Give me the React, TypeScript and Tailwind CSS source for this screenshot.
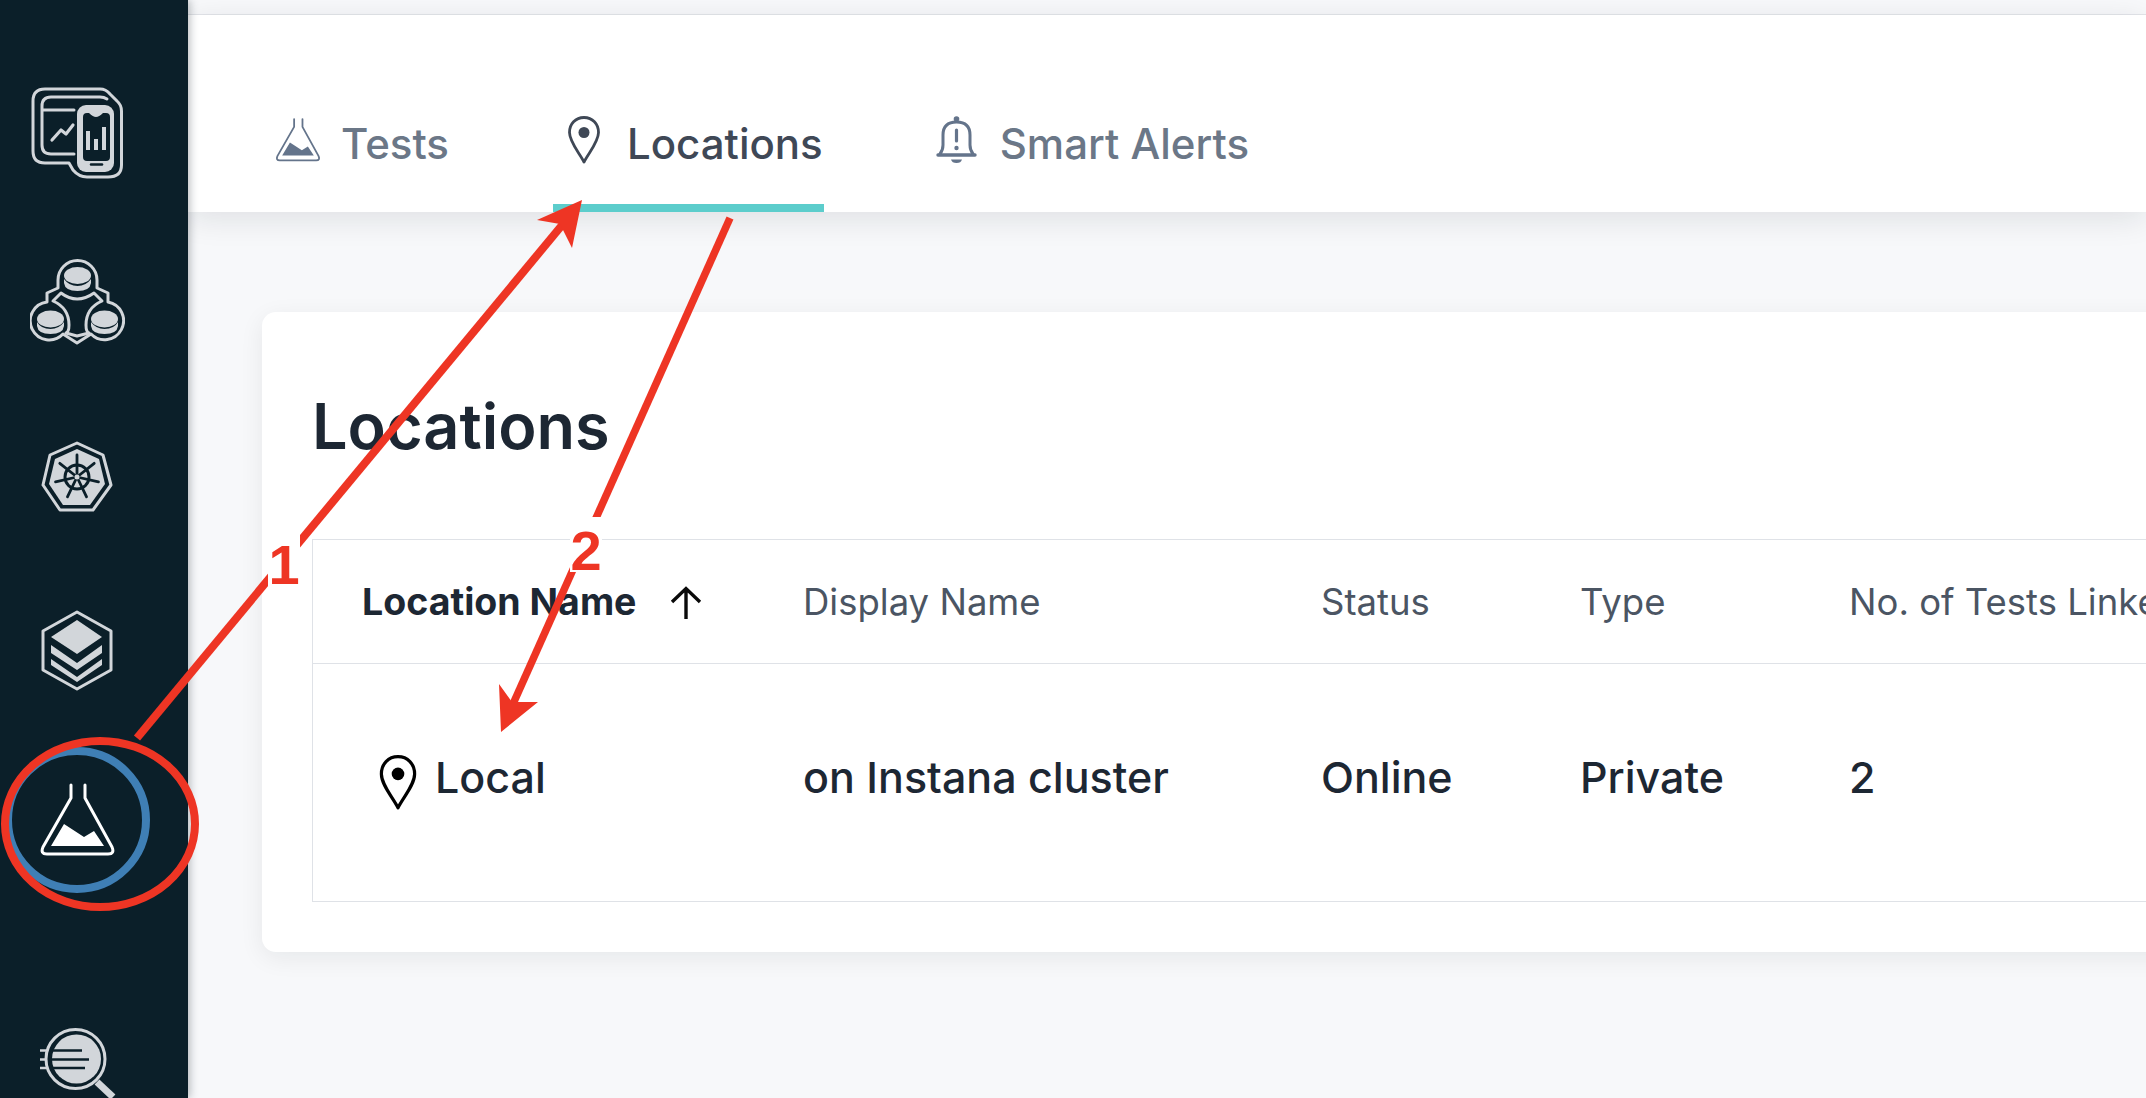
import * as React from "react"

const SIDE = "#d2d6da"
const DARK = "#0b1f29"
const RED = "#ee3524"

function MonitorIcon() {
  return (
    <svg width="95" height="94" viewBox="29 86 95 94" fill="none" stroke={SIDE} strokeWidth="3" strokeLinecap="round" strokeLinejoin="round">
      <path d="M44 89H99Q105 89 109 94L116 101Q120.500 105 120.500 111V165Q120.500 177 107 177H86Q78 177 72 170L68 163H44Q32 163 32 151V101Q32 89 44 89Z" />
      <path d="M106 99Q103 97 99 97H50Q41 97 41 106V145Q41 154 50 154H73" />
      <path d="M42 110H73" />
      <path d="M51 140L60 130L65 134L72 125" strokeWidth="3.200" />
      <rect x="76" y="105" width="37" height="67" rx="9" fill={SIDE} stroke="none" />
      <path d="M82 117Q82 113 86 113H88Q92 117 95 117Q98 117 102 113H105Q109 113 109 117V157Q109 161 105 161H86Q82 161 82 157Z" fill={DARK} stroke="none" />
      <path d="M87 131V150M95 139V150M103 127V150" strokeWidth="4" strokeLinecap="butt" />
      <path d="M90 164.500H101" stroke={DARK} strokeWidth="2.500" />
    </svg>
  )
}

function NodesIcon() {
  return (
    <svg width="95" height="86" viewBox="29 259 95 86" fill="none" stroke={SIDE} strokeWidth="3" strokeLinejoin="round">
      <path d="M57 288V280A19.500 19.500 0 0 1 96 280V288L107 293V302A19 19 0 1 1 90 334L76 343L62 334A19 19 0 1 1 46 302V293Z" />
      <path d="M60 293Q76 305 93 293L101 301Q85 308 85 325Q85 332 88 333L76 336L65 333Q68 332 68 325Q68 308 52 301Z" />
      <ellipse cx="76.500" cy="275.500" rx="13.500" ry="8.500" fill={SIDE} stroke="none" />
      <path d="M63 279V283Q64 291 76.500 291Q89 291 90 283V279Q85 286 76.500 286Q68 286 63 279Z" fill={SIDE} stroke="none" />
      <ellipse cx="49.500" cy="319" rx="13.500" ry="8.500" fill={SIDE} stroke="none" />
      <path d="M36 322V326Q37 334 49.500 334Q62 334 63 326V322Q58 329 49.500 329Q40 329 36 322Z" fill={SIDE} stroke="none" />
      <ellipse cx="103.500" cy="319" rx="13.500" ry="8.500" fill={SIDE} stroke="none" />
      <path d="M90 322V326Q91 334 103.500 334Q116 334 117 326V322Q113 329 103.500 329Q95 329 90 322Z" fill={SIDE} stroke="none" />
    </svg>
  )
}

function HelmIcon() {
  const spokes = [0, 1, 2, 3, 4, 5, 6].map((i) => {
    const a = (i * 2 * Math.PI) / 7 - Math.PI / 2
    return { x: 77 + Math.cos(a) * 22, y: 477 + Math.sin(a) * 22 }
  })
  return (
    <svg width="74" height="74" viewBox="40 440 74 74" fill="none">
      <path d="M77 443L103 455L111 485L93 510H60L43 485L50 455Z" stroke={SIDE} strokeWidth="3" strokeLinejoin="round" />
      <path d="M77 449L99 459L105 484L90 505H63L49 484L55 459Z" fill={SIDE} />
      <circle cx="77" cy="477" r="12" stroke={DARK} strokeWidth="3" />
      {spokes.map((s) => (
        <path key={s.x} d={`M77 477L${s.x} ${s.y}`} stroke={DARK} strokeWidth="2.800" strokeLinecap="round" />
      ))}
      <circle cx="77" cy="477" r="2.500" fill={SIDE} />
    </svg>
  )
}

function LayersIcon() {
  return (
    <svg width="74" height="84" viewBox="40 609 74 84" fill="none">
      <path d="M77 612L111 631V670L77 689L43 670V631Z" stroke={SIDE} strokeWidth="3" strokeLinejoin="round" />
      <path d="M77 620L102 637L77 654L51 637Z" fill={SIDE} />
      <path d="M51 645L77 663L102 645V653L77 670L51 653Z" fill={SIDE} />
      <path d="M51 659L77 677L102 659V665L77 682L51 665Z" fill={SIDE} />
    </svg>
  )
}

function FlaskIcon({ className, color }: { className: string; color: string }) {
  return (
    <svg className={className} viewBox="38 781 77 74" fill="none">
      <path d="M70 783V796L42 845Q39 852 46 852H107Q114 852 111 845L84 796V783" stroke={color} strokeWidth="3" strokeLinecap="round" strokeLinejoin="round" />
      <path d="M50 844L63 822L83 835L93 829L103 844Z" fill={color} />
    </svg>
  )
}

function SearchIcon() {
  return (
    <svg width="80" height="72" viewBox="36 1026 80 72" fill="none" stroke={SIDE}>
      <circle cx="74.500" cy="1059" r="29.500" strokeWidth="3" />
      <circle cx="75.500" cy="1059" r="24.500" fill={SIDE} stroke="none" />
      <path d="M51 1050.500H81M51 1059.500H88M51 1068H84" stroke={DARK} strokeWidth="2.500" />
      <path d="M39 1050.500H46M39 1059.500H46M39 1068H46" strokeWidth="2.500" />
      <path d="M96 1082L112 1097" strokeWidth="7" />
    </svg>
  )
}

function PinIcon({ className, color }: { className: string; color: string }) {
  return (
    <svg className={className} viewBox="0 0 32 48" fill="none">
      <path d="M16 1.500C7.500 1.500 1.500 8 1.500 16.500C1.500 26 11.500 37 16 46C20.500 37 30.500 26 30.500 16.500C30.500 8 24.500 1.500 16 1.500Z" stroke={color} strokeWidth="2.800" strokeLinejoin="round" />
      <circle cx="16" cy="16.500" r="5.500" fill={color} />
    </svg>
  )
}

function BellIcon() {
  return (
    <svg className="mb-[6px] h-[48px] w-[41px] shrink-0" viewBox="937 117 41 48" fill="none" stroke="#64748b" strokeWidth="3" strokeLinecap="round">
      <path d="M939 156H976" strokeWidth="3.400" />
      <path d="M941 155Q944 151 944 146V136Q944 123 957.500 123Q971 123 971 136V146Q971 151 974 155" />
      <circle cx="957.500" cy="120" r="2.800" fill="#64748b" stroke="none" />
      <path d="M952 160.500H963Q962 164 957.500 164Q953 164 952 160.500Z" fill="#64748b" stroke="none" />
      <path d="M957.500 131V142" strokeWidth="3.200" />
      <circle cx="957.500" cy="149" r="2.200" fill="#64748b" stroke="none" />
    </svg>
  )
}

function Annotations() {
  return (
    <>
      <svg className="absolute inset-0 z-20 h-[1098px] w-[2146px]" viewBox="0 0 2146 1098" fill="none">
        <ellipse cx="100" cy="824" rx="95" ry="83" stroke={RED} strokeWidth="8" />
        <path d="M137 738L563 224" stroke={RED} strokeWidth="8" />
        <path d="M582 200L537 220L560 224L572 248Z" fill={RED} />
        <path d="M730 218L513 704" stroke={RED} strokeWidth="7.500" />
        <path d="M501 732L499 684L512 702L538 702Z" fill={RED} />
      </svg>
      <span className="absolute left-[268px] top-[520px] z-30 flex h-[80px] w-[32px] items-center justify-center bg-white pt-[10px] font-['Liberation_Sans',sans-serif] text-[56px] leading-none font-bold text-[#ee3524]">
        1
      </span>
      <span className="absolute left-[570px] top-[517px] z-30 flex h-[55px] w-[32px] items-end justify-center bg-white font-['Liberation_Sans',sans-serif] text-[56px] leading-[42px] font-bold text-[#ee3524]">
        2
      </span>
    </>
  )
}

export default function App() {
  return (
    <div className="relative flex h-[1098px] w-[2146px] overflow-hidden bg-[#f7f8fa] font-['Inter',sans-serif]">
      {/* Sidebar */}
      <aside className="relative z-10 flex w-[188px] shrink-0 flex-col items-center bg-[#0b1f29] pr-[34px] shadow-[2px_0_8px_rgba(30,40,50,0.3)]">
        <div className="mt-[86px]">
          <MonitorIcon />
        </div>
        <div className="mt-[79px]">
          <NodesIcon />
        </div>
        <div className="mt-[95px]">
          <HelmIcon />
        </div>
        <div className="mt-[95px]">
          <LayersIcon />
        </div>
        <div className="mt-[54px] flex h-[146px] w-[146px] shrink-0 items-center justify-center rounded-full border-[8px] border-[#3f7fb5]">
          <FlaskIcon className="h-[74px] w-[77px]" color="#ffffff" />
        </div>
        <div className="mt-[133px]">
          <SearchIcon />
        </div>
      </aside>

      {/* Main */}
      <main className="flex min-w-0 flex-1 flex-col">
        <div className="h-[15px] shrink-0 border-b border-[#e4e6ea] bg-[#f8f9fb]" />

        <nav className="relative flex h-[197px] shrink-0 items-end bg-white pl-[87px] text-[42px] font-medium shadow-[0_6px_30px_rgba(20,25,35,0.11)]">
          <div className="flex h-[130px] items-center gap-[20px] border-b-[8px] border-transparent text-[#6b7787]">
            <FlaskIcon className="mb-[6px] h-[46px] w-[46px] shrink-0" color="#64748b" />
            <span>Tests</span>
          </div>
          <div className="ml-[104px] flex h-[130px] items-center gap-[27px] border-b-[8px] border-[#5ccdcc] pl-[15px] pr-[1px] text-[#3f4856]">
            <PinIcon className="mb-[6px] h-[48px] w-[32px] shrink-0" color="#3f4856" />
            <span>Locations</span>
          </div>
          <div className="ml-[112px] flex h-[130px] items-center gap-[23px] border-b-[8px] border-transparent text-[#6b7787]">
            <BellIcon />
            <span>Smart Alerts</span>
          </div>
        </nav>

        <section className="ml-[74px] mt-[100px] h-[640px] w-[2000px] rounded-[14px] bg-white pl-[50px] shadow-[0_6px_24px_rgba(20,25,35,0.07)]">
          <h1 className="pt-[69px] text-[63px] leading-[90px] font-semibold text-[#1d2733]">Locations</h1>

          <div className="mt-[68px] h-[363px] border border-[#dfe2e7]">
            <div className="grid h-[124px] grid-cols-[490px_518px_259px_269px_1fr] items-center border-b border-[#dfe2e7] pt-[2px] text-[36.500px] text-[#4b5563]">
              <div className="flex items-center pl-[49px] text-[37.500px] font-bold text-[#1d2733]">
                <span>Location Name</span>
                <svg className="ml-[33px] h-[34px] w-[34px]" viewBox="0 0 34 34" fill="none" stroke="#0a0a0a" strokeWidth="3.400">
                  <path d="M17 33V3M3 16L17 2.500L31 16" />
                </svg>
              </div>
              <div>Display Name</div>
              <div>Status</div>
              <div>Type</div>
              <div className="whitespace-nowrap">No. of Tests Linked</div>
            </div>
            <div className="grid h-[237px] grid-cols-[490px_518px_259px_269px_1fr] items-center pb-[11px] text-[43px] font-medium text-[#1d2733]">
              <div className="flex items-center gap-[17px] pl-[65px]">
                <PinIcon className="mt-[10px] h-[55px] w-[40px] shrink-0" color="#000000" />
                <span>Local</span>
              </div>
              <div>on Instana cluster</div>
              <div>Online</div>
              <div>Private</div>
              <div>2</div>
            </div>
          </div>
        </section>
      </main>

      <Annotations />
    </div>
  )
}
